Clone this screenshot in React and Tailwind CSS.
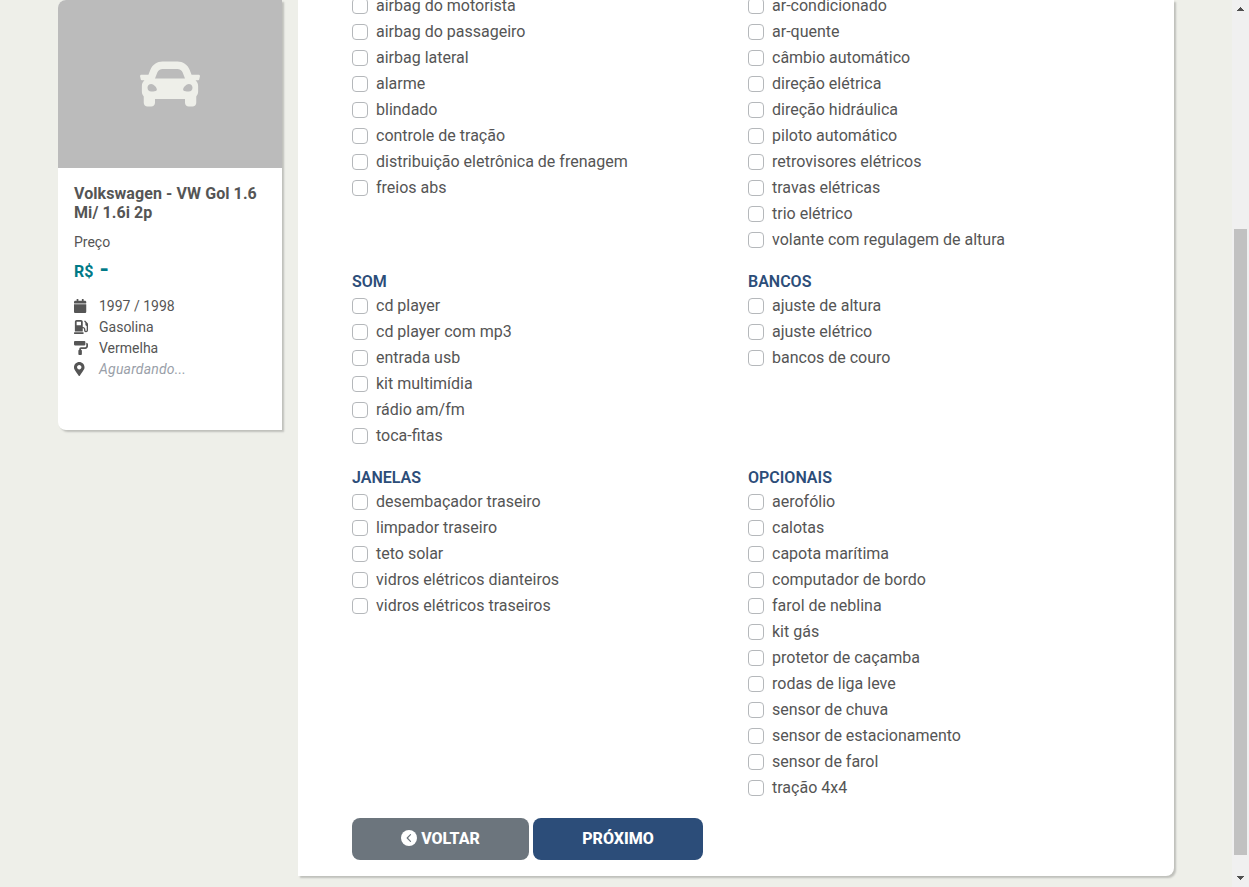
import { FaCar, FaCalendar, FaGasPump, FaPaintRoller, FaMapMarkerAlt } from "react-icons/fa";

const groups = [
  [
    { items: ["airbag do motorista", "airbag do passageiro", "airbag lateral", "alarme", "blindado", "controle de tração", "distribuição eletrônica de frenagem", "freios abs"] },
    { items: ["ar-condicionado", "ar-quente", "câmbio automático", "direção elétrica", "direção hidráulica", "piloto automático", "retrovisores elétricos", "travas elétricas", "trio elétrico", "volante com regulagem de altura"] },
  ],
  [
    { title: "SOM", items: ["cd player", "cd player com mp3", "entrada usb", "kit multimídia", "rádio am/fm", "toca-fitas"] },
    { title: "BANCOS", items: ["ajuste de altura", "ajuste elétrico", "bancos de couro"] },
  ],
  [
    { title: "JANELAS", items: ["desembaçador traseiro", "limpador traseiro", "teto solar", "vidros elétricos dianteiros", "vidros elétricos traseiros"] },
    { title: "OPCIONAIS", items: ["aerofólio", "calotas", "capota marítima", "computador de bordo", "farol de neblina", "kit gás", "protetor de caçamba", "rodas de liga leve", "sensor de chuva", "sensor de estacionamento", "sensor de farol", "tração 4x4"] },
  ],
];

const details = [
  { Icon: FaCalendar, text: "1997 / 1998" },
  { Icon: FaGasPump, text: "Gasolina" },
  { Icon: FaPaintRoller, text: "Vermelha" },
  { Icon: FaMapMarkerAlt, text: "Aguardando...", pending: true },
];

function Option({ label }) {
  return (
    <label className="flex h-[26px] items-center gap-2">
      <input type="checkbox" className="size-4 shrink-0 appearance-none rounded-[4px] border border-[#b5b8bb] bg-white" />
      <span className="leading-6">{label}</span>
    </label>
  );
}

function Group({ title, items }) {
  return (
    <section className="w-[396px]">
      {title && <h2 className="h-6 font-semibold leading-[26px] text-[#2c4d79]">{title}</h2>}
      {items.map((item) => (
        <Option key={item} label={item} />
      ))}
    </section>
  );
}

function VehicleCard() {
  return (
    <aside className="h-[430px] w-[224px] shrink-0 rounded-l-lg bg-white shadow-[2px_2px_2px_0_rgba(0,0,0,0.2)]">
      <div className="flex h-[168px] items-center justify-center rounded-tl-lg bg-[#bbbbbb]">
        <FaCar className="size-[60px] text-[#eeefe9]" />
      </div>
      <div className="px-4 pt-4">
        <h1 className="text-base font-bold leading-[19px] tracking-[0.08px]">Volkswagen - VW Gol 1.6 Mi/ 1.6i 2p</h1>
        <p className="mt-[10px] text-sm leading-[21px]">Preço</p>
        <p className="mt-[4px] text-base font-bold leading-6 text-[#007a87]">
          R$ <span className="ml-0.5 text-2xl leading-6">-</span>
        </p>
        <ul className="mt-[11px]">
          {details.map(({ Icon, text, pending }) => (
            <li key={text} className="flex h-[21px] items-center text-sm">
              <span className="w-[25px] shrink-0">
                <Icon className="size-[14px]" preserveAspectRatio="xMinYMid meet" />
              </span>
              <span className={pending ? "italic tracking-[0.2px] text-[#9a9fa9]" : ""}>{text}</span>
            </li>
          ))}
        </ul>
      </div>
    </aside>
  );
}

function Scrollbar() {
  return (
    <div className="flex h-full w-[17px] shrink-0 flex-col items-center bg-[#f0f0f0]">
      <svg className="h-[229px] w-[17px]" viewBox="0 0 17 229" shapeRendering="crispEdges">
        <path d="M5 11h7L8.500 7z" fill="#505050" />
      </svg>
      <div className="h-[626px] w-[13px] bg-[#c1c1c1]" />
      <svg className="h-8 w-[17px]" viewBox="0 0 17 32" shapeRendering="crispEdges">
        <path d="M5 21h7l-3.500 4z" fill="#505050" />
      </svg>
    </div>
  );
}

export default function App() {
  return (
    <div className="flex h-[887px] w-full overflow-hidden bg-[#eeefe9] font-[Roboto,sans-serif] text-base text-[#555555]">
      <div className="flex flex-1 items-start gap-4 pl-[58px]">
        <VehicleCard />
        <main className="flex h-[876px] w-[876px] flex-col rounded-br-lg bg-white pl-[54px] shadow-[2px_2px_2px_0_rgba(0,0,0,0.2)]">
          <div className="-mt-[7px] flex flex-col gap-4">
            {groups.map((row, i) => (
              <div key={i} className="flex">
                {row.map((group) => (
                  <Group key={group.items[0]} {...group} />
                ))}
              </div>
            ))}
          </div>
          <div className="mt-[17px] flex gap-1 font-extrabold text-white">
            <button className="flex h-[42px] w-[177px] items-center justify-center gap-1 rounded-lg bg-[#6c757d]">
              <svg className="mb-0.5 size-4" viewBox="0 0 16 16">
                <circle cx="8" cy="8" r="8" fill="currentColor" />
                <path d="M9.500 4.700 6.200 8l3.300 3.300" fill="none" stroke="#6c757d" strokeWidth="1.200" strokeLinecap="round" strokeLinejoin="round" />
              </svg>
              VOLTAR
            </button>
            <button className="h-[42px] w-[170px] rounded-lg bg-[#2c4d79]">PRÓXIMO</button>
          </div>
        </main>
      </div>
      <Scrollbar />
    </div>
  );
}
